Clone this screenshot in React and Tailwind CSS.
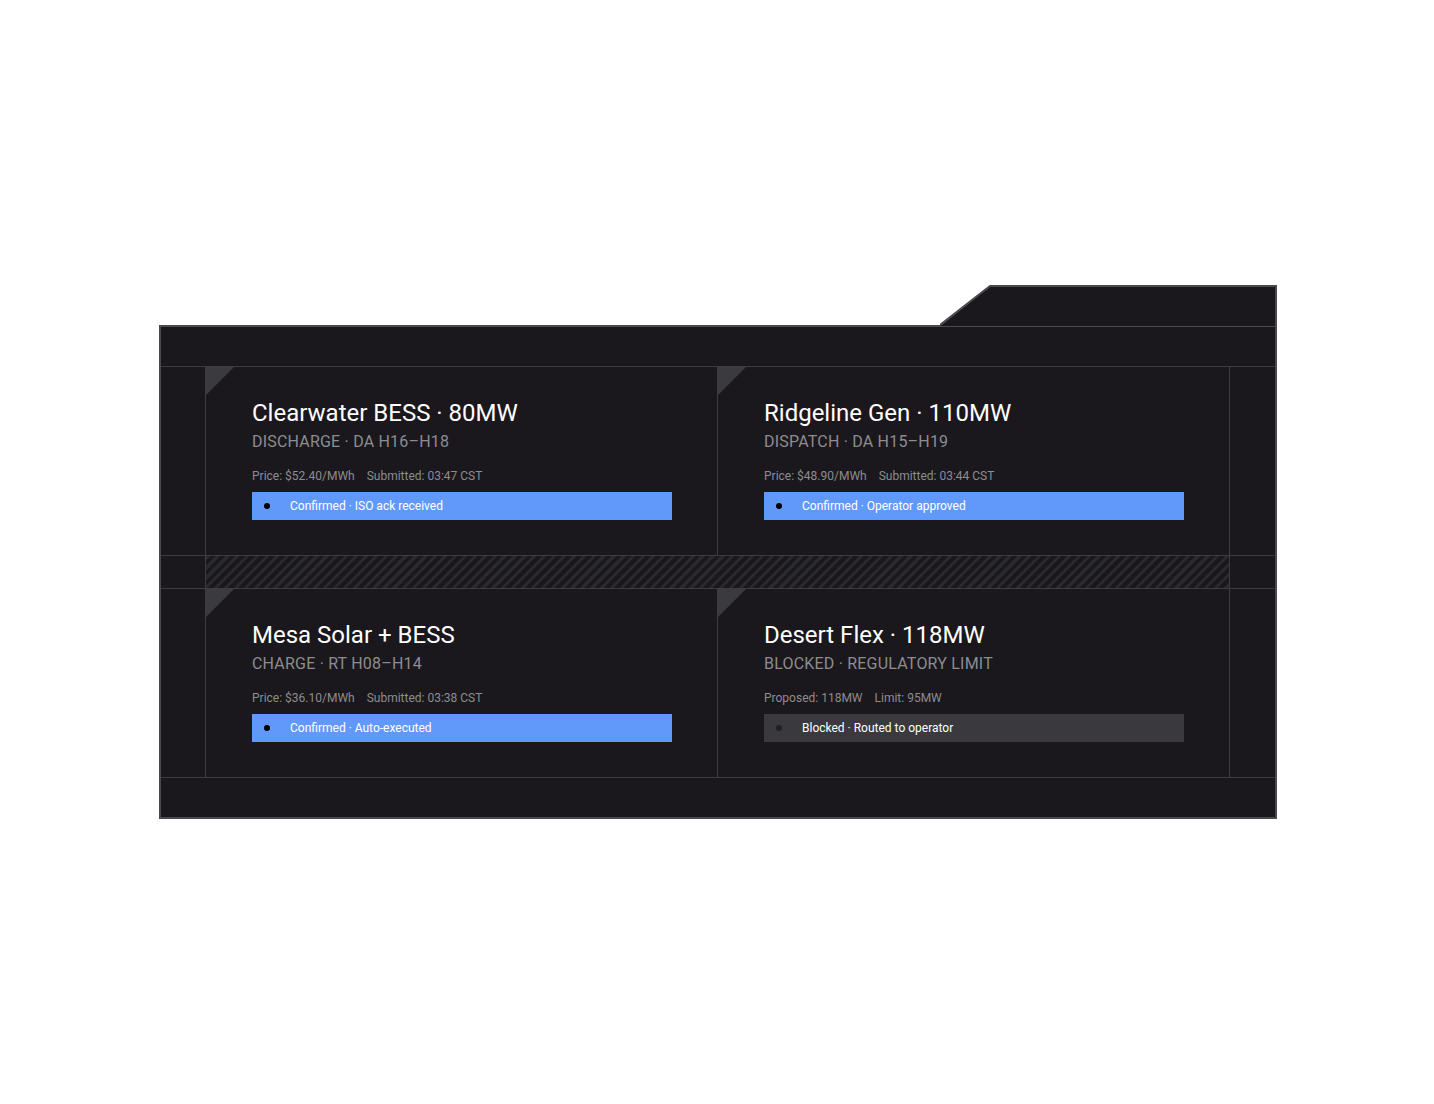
const CARDS = [
  { title: 'Clearwater BESS · 80MW', sub: 'DISCHARGE · DA H16–H18', meta: ['Price: $52.40/MWh', 'Submitted: 03:47 CST'], status: 'Confirmed · ISO ack received', ok: true },
  { title: 'Ridgeline Gen · 110MW', sub: 'DISPATCH · DA H15–H19', meta: ['Price: $48.90/MWh', 'Submitted: 03:44 CST'], status: 'Confirmed · Operator approved', ok: true },
  { title: 'Mesa Solar + BESS', sub: 'CHARGE · RT H08–H14', meta: ['Price: $36.10/MWh', 'Submitted: 03:38 CST'], status: 'Confirmed · Auto-executed', ok: true },
  { title: 'Desert Flex · 118MW', sub: 'BLOCKED · REGULATORY LIMIT', meta: ['Proposed: 118MW', 'Limit: 95MW'], status: 'Blocked · Routed to operator', ok: false },
]

function Card({ c }) {
  return (
    <div className="relative h-[188px] pl-[46px] pt-[30px]">
      <div className="absolute left-0 top-0 w-[28px] h-[28px] bg-[#3b3a3f] [clip-path:polygon(0_0,100%_0,0_100%)]" />
      <div className="text-[24px] leading-[32px] text-white">{c.title}</div>
      <div className="text-[16px] leading-[24px] mt-[1px] text-[#8d8c91] tracking-[0.2px]">{c.sub}</div>
      <div className="flex gap-[12px] text-[12px] text-[#8d8c91] mt-[12px] leading-[20px]">
        {c.meta.map(m => <span key={m}>{m}</span>)}
      </div>
      <div className={`mt-[6px] w-[420px] h-[28px] flex items-center text-[12px] ${c.ok ? 'bg-[#6199fb] text-white' : 'bg-[#3a393e] text-white'}`}>
        <span className={`ml-[12px] w-[6px] h-[6px] rounded-full ${c.ok ? 'bg-black' : 'bg-[#222125]'}`} />
        <span className="ml-[20px]">{c.status}</span>
      </div>
    </div>
  )
}

export default function App() {
  return (
    <div className="w-[1434px] h-[1104px] bg-white pt-[285px] pl-[159px]" style={{ fontFamily: 'Roboto, "Liberation Sans", sans-serif' }}>
      <div className="w-[1118px]">
        <div className="flex justify-end h-[41px] -mb-[1px] relative z-10">
          <svg width="337" height="41" viewBox="0 0 337 41">
            <path d="M0 40.5 L783 40.5" stroke="#4a494e" />
            <path d="M-1 41 L0 41 L50 1 L336 1 L336 41 Z" fill="#1a181c" />
            <path d="M0 40 L50 1 L336 1 L336 41" fill="none" stroke="#4a494e" strokeWidth="2" />
          </svg>
        </div>
        <div className="bg-[#1a181c] border-2 border-[#4a494e] border-r-2">
          <div className="h-[40px] border-b border-[#3c3b40]" />
          <div className="grid grid-cols-[45px_512px_512px_1fr]">
            <div className="border-r border-[#3c3b40]" />
            <div className="border-r border-[#3c3b40]"><Card c={CARDS[0]} /></div>
            <div className="border-r border-[#3c3b40]"><Card c={CARDS[1]} /></div>
            <div />
          </div>
          <div className="grid grid-cols-[45px_1024px_1fr] h-[34px] border-y border-[#3c3b40]">
            <div className="border-r border-[#3c3b40]" />
            <div className="border-r border-[#3c3b40] bg-[repeating-linear-gradient(135deg,#2a292e_0_3px,#1a181c_3px_7px)]" />
            <div />
          </div>
          <div className="grid grid-cols-[45px_512px_512px_1fr] border-b border-[#3c3b40]">
            <div className="border-r border-[#3c3b40]" />
            <div className="border-r border-[#3c3b40]"><Card c={CARDS[2]} /></div>
            <div className="border-r border-[#3c3b40]"><Card c={CARDS[3]} /></div>
            <div />
          </div>
          <div className="h-[39px]" />
        </div>
      </div>
    </div>
  )
}
